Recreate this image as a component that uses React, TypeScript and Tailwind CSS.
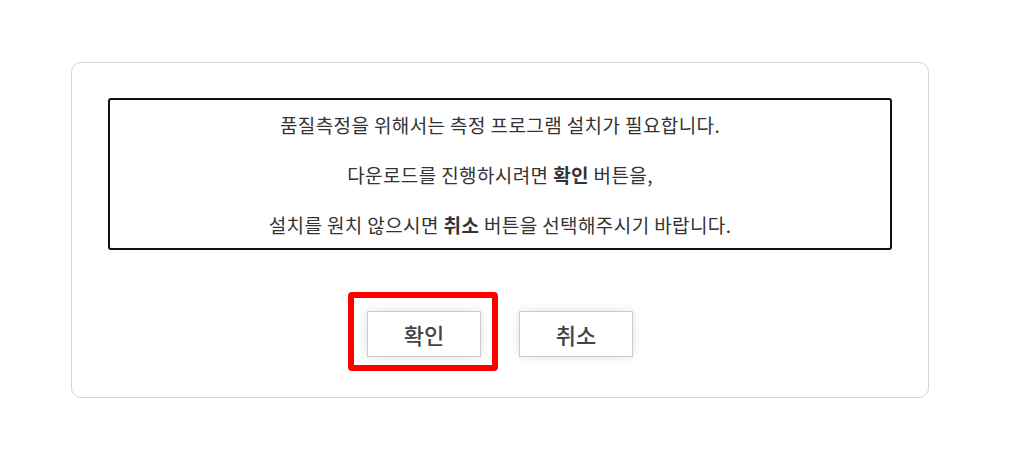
export default function App() {
  return (
    <div className="min-h-[469px] w-full bg-white pt-[62px] font-['Noto_Sans_CJK_KR','Noto_Sans',sans-serif] text-[#333]">
      <div className="ml-[71px] w-[858px] rounded-[10px] border border-[#d4d4d4] px-[36px] pb-[40px] pt-[35px]">
        <div className="flex flex-col items-center gap-[24px] rounded-[3px] border-2 border-[#111] pb-[10px] pt-[12px] text-[19px] leading-[26px] tracking-[0.4px]">
          <p>품질측정을 위해서는 측정 프로그램 설치가 필요합니다.</p>
          <p>
            다운로드를 진행하시려면 <b className="font-bold">확인</b> 버튼을,
          </p>
          <p>
            설치를 원치 않으시면 <b className="font-bold">취소</b> 버튼을 선택해주시기 바랍니다.
          </p>
        </div>
        <div className="mt-[61px] flex justify-center gap-[38px]">
          <div className="relative">
            <button className="h-[46px] w-[114px] border border-[#ccc] bg-white text-[22px] font-medium text-[#444] shadow-[0_0_10px_rgba(0,0,0,0.12)]">
              확인
            </button>
            <div className="pointer-events-none absolute -bottom-[14px] -left-[19px] -right-[17px] -top-[19px] rounded-[4px] border-[6px] border-[#ff0000]" />
          </div>
          <button className="h-[46px] w-[114px] border border-[#ccc] bg-white text-[22px] font-medium text-[#444] shadow-[0_0_10px_rgba(0,0,0,0.12)]">
            취소
          </button>
        </div>
      </div>
    </div>
  );
}
